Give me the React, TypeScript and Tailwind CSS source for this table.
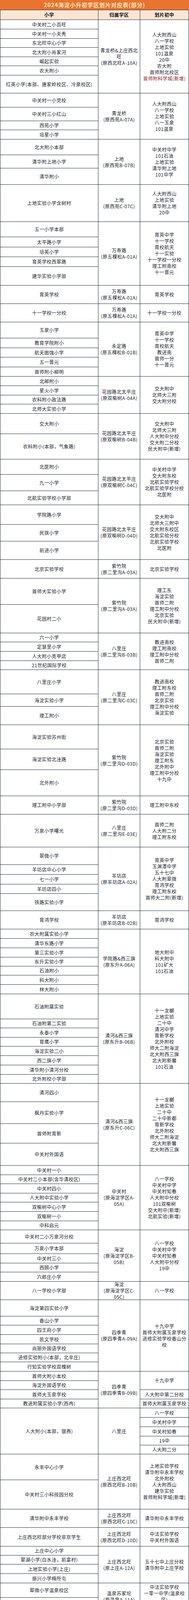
import React from 'react';

type G = { b: number[]; l: string[]; m: string[]; r: string[]; rb?: number[]; red?: number };

const groups: G[] = [
  { b: [51, 75, 99, 122, 146, 169, 193, 239], l: ['中关村二小百旺', '中关村一小天秀', '东北旺中心小学', '北大附小肖家河', '崛起实验', '农大附小', '红英小学(本部、唐家岭校区、冷泉校区)'], m: ['青龙桥&上庄西北', '旺', '(原西北旺A-10A)'], r: ['人大附西山', '八一学校', '上地实验', '101温泉', '20中', '农大附', '首师附北校区', '首师附科学城(新增)'], red: 7 },
  { b: [239, 275, 310, 333, 357], l: ['中关村一小党校', '中关村三小红山', '西苑小学', '培星小学'], m: ['青龙桥', '(原西苑A-07A)'], r: ['人大附西山', '八一学校', '上地实验', '八一玉泉', '101温泉'] },
  { b: [357, 397, 431, 473], l: ['北大附小本部', '清华附上地小学', '清华附小'], m: ['上地', '(原西苑B-07B)'], r: ['中关村中学', '101石油', '上地实验', '清华附上地', '101中学'] },
  { b: [473, 568], l: ['上地实验小学含树村'], m: ['上地', '(原西苑C-07C)'], r: ['人大附西山', '上地实验', '清华附上地', '20中'] },
  { b: [568, 607, 633, 658, 683, 731], l: ['五一小学本部', '太平路小学', '培英小学', '育英学校西翠路', '建华实验小学部'], m: ['万寿路', '(原五棵松A-01A)'], r: ['育英中学', '十一学校', '育校航天', '十一实验', '十一学校一分校', '理工附南校', '十一晋元'] },
  { b: [731, 778], l: ['育英学校'], m: ['万寿路', '(原五棵松A-01A)'], r: ['育英学校'] },
  { b: [778, 825], l: ['十一学校一分校'], m: ['万寿路', '(原五棵松A-01A)'], r: ['十一学校一分校'] },
  { b: [825, 866, 891, 915, 940, 964], l: ['玉泉小学', '教育学院附小', '航天图强小学', '五一晋元', '首师附小柳明'], m: ['永定路', '(原五棵松B-01B)'], r: ['育英中学', '十一学校', '育校航天', '教进南', '首师一分', '十一晋元'] },
  { b: [964, 988, 1012, 1035, 1059], l: ['北邮附小', '星火小学', '农科附小政法路', '北师大实验小学'], m: ['花园路北太平庄', '(原双榆树A-04A)'], r: ['交大附中', '北师大三附', '交大附分校'] },
  { b: [1059, 1111, 1176], l: ['交大附小', '农科附小(本部，气象路)'], m: ['花园路北太平庄', '(原双榆树B-04B)'], r: ['交大附中', '北师大三附', '人大附中分校', '交大附二分校', '民大附中(新增)'] },
  { b: [1176, 1215, 1257, 1293], l: ['北医附小', '九一小学', '北航实验学校小学部'], m: ['花园路北太平庄', '(原双榆树C-04C)'], r: ['中关村中学', '交大附东校', '北航实验学校', '北航实验学校分校', '北医附'] },
  { b: [1293, 1343, 1386, 1433], l: ['学院路小学', '民族小学', '前进小学'], m: ['花园路北太平庄', '(原双榆树D-04D)'], r: ['交大附中', '北师大三附中', '交大附东校区', '北航实验分校', '北航实验学校', '北医附'] },
  { b: [1433, 1481], l: ['北京实验学校'], m: ['紫竹院', '(原二里沟A-03A)'], r: ['北京实验学校'] },
  { b: [1481, 1548, 1621], l: ['首师大实验小学', '花园村二小'], m: ['紫竹院', '(原二里沟A-03A)'], r: ['理工东', '海淀实验', '首师二附', '理工附中分校', '北京实验', '民大附中(新增)'] },
  { b: [1621, 1644, 1668, 1692, 1715], l: ['六一小学', '定慧里小学', '人大附小亮甲店', '21世纪国际学校'], m: ['八里庄', '(原二里沟B-03B)'], r: ['教进南校', '理工附南校', '理工附中分校', '首师二附'] },
  { b: [1715, 1777, 1809, 1856], l: ['八里庄小学', '海淀实验小学', '理工附小'], m: ['八里庄', '(原二里沟C-03C)'], r: ['教进南校', '理工附东校', '首师二附', '北京实验', '理工附中分校', '海淀实验'] },
  { b: [1856, 1918, 1971, 2038], l: ['海淀实验苏州街', '海淀实验北洼路', '北外附小'], m: ['紫竹院', '(原二里沟D-03D)'], r: ['北京实验', '首师二附', '海淀实验', '理工附东', '北外附中', '理工附中分校', '十九中'] },
  { b: [2038, 2085], l: ['理工附中小学部'], m: ['紫竹院', '(原二里沟D-03D)'], r: ['理工附中东校'] },
  { b: [2085, 2169], l: ['万泉小学曙光'], m: ['八里庄', '(原二里沟E-03E)'], r: ['首师二附', '人大附二分', '理工附东校'] },
  { b: [2169, 2214, 2239, 2264, 2288, 2332], l: ['翠微小学', '羊坊店中心小学', '七一小学', '羊坊店四小', '铁路实验小学'], m: ['羊坊店', '(原羊坊店A-02A)'], r: ['育英中学', '玉渊潭中学', '五十七中', '人大附翠微', '育鸿学校', '理工附东校', '首师大二附(新增)'] },
  { b: [2332, 2379], l: ['育鸿学校'], m: ['羊坊店', '(原羊坊店B-02B)'], r: ['育鸿学校'] },
  { b: [2379, 2403, 2427, 2451, 2474, 2497, 2521, 2545], l: ['农大附属实验小学', '清华东路小学', '第三实验小学', '东升实验小学', '石油附小', '科大附小', '林大附小'], m: ['学院路&西三旗', '(原东升A-06A)'], r: ['地大附中', '科大附中', '101矿大', '101石油'] },
  { b: [2545, 2609, 2632, 2656, 2679, 2703, 2727, 2751, 2774], l: ['石油附属实验', '石油附第二实验', '永泰小学', '育鹰小学', '海淀实验二小', '西二旗小学', '清华附小清河分校', '北外附校小学部'], m: ['清河&西三旗', '(原东升B-06B)'], r: ['十一龙樾', '上地实验', '二十中', '清河中学', '育新学校', '北外附校', '师大二附海淀', '北大附西三旗', '北大附新馨', '101石油'] },
  { b: [2774, 2821, 2877, 2927, 2984], l: ['清河四小', '枫丹实验小学', '首师附育新', '中关村外国语'], m: ['清河&西三旗', '(原东升C-06C)'], r: ['十一龙樾', '上地实验', '二十中', '二十中新都', '育新学校', '北外附校', '师大二附海淀', '北大附新馨', '北大附西三旗'] },
  { b: [2984, 3008, 3031, 3055, 3078, 3102, 3126, 3149], l: ['中关村一小', '中关村二小本部(含华清校区)', '中关村四小', '人大附中实验小学', '双榆树中心小学', '双榆树一小', '中科启元'], m: ['中关村', '(原海淀学区A-', '05A)'], r: ['八一学校', '中关村中学', '中关村知春', '人大附中分校', '101双榆树', '交大附中(新增)', '北航实验(新增)'] },
  { b: [3149, 3183, 3210, 3234, 3257, 3281], l: ['中关村二小万泉河分校', '万泉小学本部', '中关村三小', '西颐小学', '六郎庄小学'], m: ['海淀', '(原海淀学区B-', '05B)'], r: ['八一学校', '中关村中学', '中关村知春', '人大附中分校', '19中'] },
  { b: [3281, 3328], l: ['八一学校小学部'], m: ['海淀', '(原海淀学区C-', '05C)'], r: ['八一学校'] },
  { b: [3328, 3370, 3393, 3417, 3441, 3464, 3487, 3511], l: ['海淀第四实验小学', '香山小学', '四王府小学', '凯文学校', '尚丽外国语学校', '进修实验附小(本部，北辛庄)', '行知实验学校双槐树'], m: ['四季青', '(原四季青A-09A)'], r: ['十九中学', '首师大附属玉泉学校', '进修实验学校香山分', '校'] },
  { b: [3511, 3535, 3558, 3582, 3605], l: ['首师大附小本校', '海淀外国语学校', '首师大玉泉学校', '教进附属实验小学(西冉)'], m: ['四季青', '(原四季青B-09B)'], r: ['十九中学', '人大附中第二分校', '首师大附属玉泉学校'], rb: [3511, 3558, 3582, 3605] },
  { b: [3605, 3723], l: ['人大附小(本部，银燕)'], m: ['八里庄'], r: ['八一学校', '中关村中学', '中关村知春', '19中', '人大附二分'], rb: [3605, 3629, 3653, 3677, 3700, 3723] },
  { b: [3723, 3789, 3864], l: ['永丰中心小学', '中关村三小科技园分校'], m: ['上庄西北旺', '(原西北旺B-10B)'], r: ['上地实验学校', '清华附中永丰学校', '北外附校', '人大附西山', '建华实验', '首师附科学城(新增)'] },
  { b: [3864, 3911], l: ['清华附中永丰学校'], m: ['上庄西北旺', '(原西北旺C-10C)'], r: ['清华附中永丰学校'] },
  { b: [3911, 3959], l: ['上庄西北旺部分学校非京学生'], m: ['上庄西北旺', '(原西北旺D-10D)'], r: ['中法实验学校', '中关村外国语'] },
  { b: [3959, 3982, 4005, 4029, 4053], l: ['上庄中心小学', '翠湖小学(白水洼，前拿村)', '上地实验小学(上庄)', '振兴小学梅所屯'], m: ['上庄西北旺', '(原上庄A-12A)'], r: ['五十七中上庄分校', '清华附中上庄学校'] },
  { b: [4053, 4090, 4122], l: ['翠微小学温泉校区', '中法实验学校'], m: ['温泉苏家坨', '(原温泉A-11A)'], r: ['中法实验学校', '一零一中学(温泉校', '区)', '十一科学城'] },
];

function Group({ g }: { g: G }) {
  const total = g.b[g.b.length - 1] - g.b[0];
  return (
    <div className="flex" style={{ height: total }}>
      <div className="w-[251px] flex flex-col border-l border-[#25303c]">
        {g.l.map((t, i) => (
          <div
            key={i}
            className="flex items-center justify-center border-b border-[#25303c] whitespace-nowrap"
            style={{ height: g.b[i + 1] - g.b[i] }}
          >
            {t}
          </div>
        ))}
      </div>
      <div className="w-[107px] flex flex-col items-center justify-center border-l border-b border-[#25303c] leading-[16px]">
        {g.m.map((t, i) => (
          <div key={i} className="whitespace-nowrap">{t}</div>
        ))}
      </div>
      {g.rb ? (
        <div className="w-[126px] flex flex-col border-l border-r border-[#25303c]">
          {g.r.map((t, i) => (
            <div
              key={i}
              className="flex items-center justify-center border-b border-[#25303c] whitespace-nowrap"
              style={{ height: g.rb![i + 1] - g.rb![i] }}
            >
              {t}
            </div>
          ))}
        </div>
      ) : (
        <div className="w-[126px] flex flex-col items-center justify-center border-l border-r border-b border-[#25303c] leading-[16px]">
          {g.r.map((t, i) => (
            <div key={i} className={g.red === i ? 'whitespace-nowrap text-[#8e1f2c]' : 'whitespace-nowrap'}>
              {t}
            </div>
          ))}
        </div>
      )}
    </div>
  );
}

export default function App() {
  return (
    <div className="w-[484px] bg-white text-[#18222e] text-[12px] tracking-[0.5px] font-['Noto_Sans_CJK_SC','Noto_Sans',sans-serif]">
      <div className="h-[25px] bg-[#e8742f] flex items-center justify-center text-[#fbe8bd] text-[14px] font-bold tracking-[1px]">
        2024海淀小升初学区划片对应表(部分)
      </div>
      <div className="h-[26px] flex bg-[#fde5d3] border-t border-b border-[#25303c] font-bold text-[#111]">
        <div className="w-[251px] flex items-center justify-center border-l border-[#25303c]">小学</div>
        <div className="w-[107px] flex items-center justify-center border-l border-[#25303c]">归属学区</div>
        <div className="w-[126px] flex items-center justify-center border-l border-r border-[#25303c]">划片初中</div>
      </div>
      {groups.map((g, i) => (
        <Group key={i} g={g} />
      ))}
    </div>
  );
}
